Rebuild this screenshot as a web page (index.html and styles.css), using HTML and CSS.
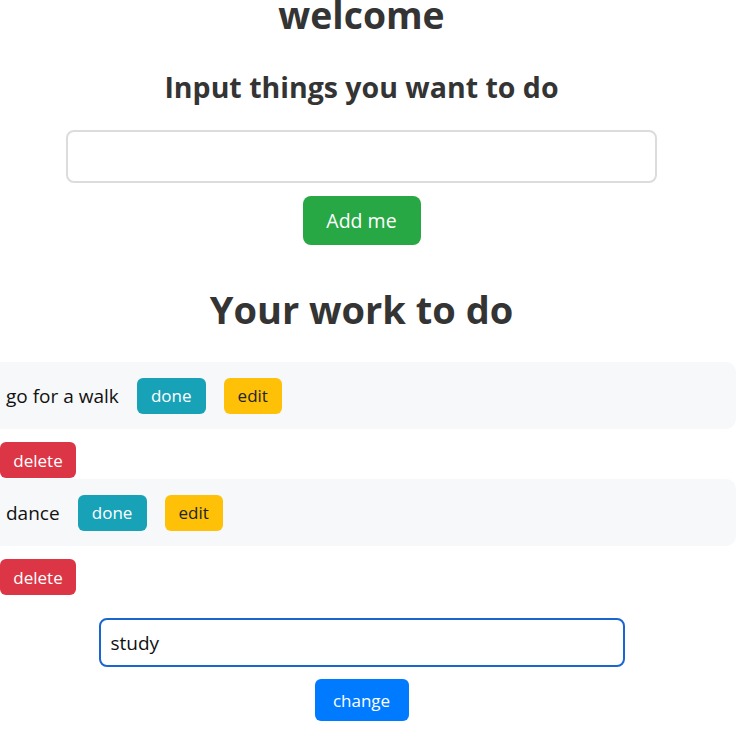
FILE: index.html
```html
<!DOCTYPE html>
<html lang="en">
<head>
<meta charset="utf-8">
<title>todo</title>
<link rel="stylesheet" href="styles.css">
</head>
<body>
<main class="page">
  <h1 class="title">welcome</h1>
  <h3 class="subtitle">Input things you want to do</h3>
  <input class="field field-new" type="text">
  <button class="btn btn-lg btn-add">Add me</button>
  <h1 class="section">Your work to do</h1>
  <ul class="list">
    <li class="item">
      <div class="item-row">
        <span class="item-text">go for a walk</span>
        <button class="btn btn-done">done</button>
        <button class="btn btn-edit">edit</button>
      </div>
      <button class="btn btn-delete">delete</button>
    </li>
    <li class="item">
      <div class="item-row">
        <span class="item-text">dance</span>
        <button class="btn btn-done">done</button>
        <button class="btn btn-edit">edit</button>
      </div>
      <button class="btn btn-delete">delete</button>
    </li>
  </ul>
  <input class="field field-edit" type="text" value="study">
  <button class="btn btn-change">change</button>
</main>
</body>
</html>
```

FILE: styles.css
```css
html, body {
  margin: 0;
  padding: 0;
  background: #fff;
  overflow: hidden;
}
body {
  font-family: "Open Sans", "Noto Sans", sans-serif;
  color: #212529;
}
.page {
  width: 723px;
  display: flex;
  flex-direction: column;
  align-items: center;
}
.title {
  margin: -9px 0 0;
  font-size: 37.3px;
  line-height: 48px;
  font-weight: 700;
  color: #343434;
}
.subtitle {
  margin: 32px 0 0;
  font-size: 28.5px;
  line-height: 32px;
  font-weight: 700;
  color: #343434;
}
.field {
  box-sizing: border-box;
  font-family: inherit;
  background: #fff;
  border-radius: 8px;
  outline: none;
  color: #111;
}
.field-new {
  margin-top: 27px;
  width: 591px;
  height: 53px;
  border: 2px solid #dcdcdc;
}
.btn {
  font-family: inherit;
  border: none;
  border-radius: 6px;
  color: #fff;
  cursor: pointer;
  padding: 0 12px;
  height: 36px;
  font-size: 17px;
}
.btn-lg {
  margin-top: 13px;
  height: 49px;
  width: 118px;
  font-size: 19.5px;
  border-radius: 8px;
}
.btn-add { background: #28a745; }
.section {
  margin: 41px 0 0;
  font-size: 38px;
  line-height: 46px;
  font-weight: 700;
  color: #343434;
}
.list {
  list-style: none;
  margin: 30px 0 0;
  padding: 0;
  align-self: stretch;
}
.item {
  display: flex;
  flex-direction: column;
  align-items: flex-start;
}
.item-row {
  box-sizing: border-box;
  margin-left: -10px;
  width: 746px;
  height: 67px;
  padding: 0 0 0 16px;
  background: #f7f8fa;
  border-radius: 10px;
  display: flex;
  align-items: center;
  gap: 18px;
}
.item-text {
  font-size: 19px;
  color: #111;
}
.btn-done { background: #17a2b8; width: 69px; }
.btn-edit { background: #ffc107; color: #212529; width: 58px; }
.btn-delete {
  background: #dc3545;
  width: 76px;
  margin: 13px 0 1px;
}
.field-edit {
  margin-top: 22px;
  width: 526px;
  height: 49px;
  border: 2px solid #1a66d0;
  padding: 0 10px;
  font-size: 19px;
}
.btn-change {
  margin-top: 12px;
  width: 94px;
  height: 42px;
  background: #007bff;
  font-size: 17px;
}
```
